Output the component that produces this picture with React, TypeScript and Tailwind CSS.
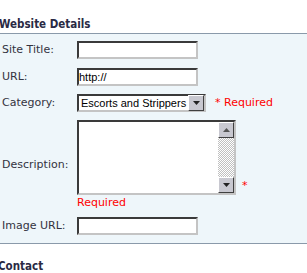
import React from 'react'

const label = 'w-[75px] shrink-0 text-[11px] text-[#333340]'
const inset = 'border-2 border-t-[#3a3a3a] border-l-[#3a3a3a] border-r-[#c4c4c4] border-b-[#c4c4c4] bg-white'

function Btn({ up }: { up?: boolean }) {
  return (
    <div className="w-[16px] h-[16px] flex items-center justify-center bg-[#c8c8d0] border border-t-white border-l-white border-r-[#404040] border-b-[#404040]">
      <svg width="7" height="4" viewBox="0 0 7 4">
        {up ? <path d="M0 4 L7 4 L3.5 0 Z" fill="#555" /> : <path d="M0 0 L7 0 L3.5 4 Z" fill="#222" />}
      </svg>
    </div>
  )
}

export default function App() {
  return (
    <div className="w-[307px] h-[273px] overflow-hidden bg-white" style={{ fontFamily: '"DejaVu Sans", Verdana, sans-serif' }}>
      <h2 className="pt-[17px] ml-[-1px] h-[33px] leading-[15px] text-[11.5px] font-bold text-[#2a2a44]" style={{ fontFamily: '"DejaVu Sans Condensed", "DejaVu Sans", sans-serif' }}>
        Website Details
      </h2>
      <div className="border-t border-b border-[#8a9aaa] bg-[#eef6fa] pt-[7px] pb-[8px] pl-[2px]">
        <div className="flex items-center h-[18px]">
          <span className={label}>Site Title:</span>
          <div className={`w-[121px] h-[18px] ${inset}`} />
        </div>
        <div className="flex items-center h-[18px] mt-[9px]">
          <span className={label}>URL:</span>
          <div className={`w-[121px] h-[18px] ${inset} text-[11px] leading-[14px] text-black`} style={{ fontFamily: '"Liberation Sans", Arial, sans-serif' }}>
            http://
          </div>
        </div>
        <div className="flex items-center h-[18px] mt-[8px]">
          <span className={label}>Category:</span>
          <div className={`w-[129px] h-[18px] ${inset} flex items-center justify-between`}>
            <span className="pl-[2px] text-[11px] text-black" style={{ fontFamily: '"Liberation Sans", Arial, sans-serif' }}>Escorts and Strippers</span>
            <Btn />
          </div>
          <span className="ml-[9px] text-[11px] text-[#ff0000]">* Required</span>
        </div>
        <div className="flex items-center mt-[8px]">
          <span className={label}>Description:</span>
          <div className="flex flex-col">
            <div className="flex items-end">
              <div className={`w-[159px] h-[75px] ${inset} flex justify-end`}>
                <div className="w-[16px] h-full flex flex-col justify-between bg-[repeating-conic-gradient(#c0c0c0_0%_25%,#ffffff_0%_50%)] bg-[length:2px_2px]">
                  <Btn up />
                  <Btn />
                </div>
              </div>
              <span className="ml-[6px] mb-[3px] text-[11px] leading-[12px] text-[#ff0000]">*</span>
            </div>
            <div className="mt-[1px] h-[14px] text-[11px] leading-[14px] text-[#ff0000]">Required</div>
          </div>
        </div>
        <div className="flex items-center h-[18px] mt-[7px]">
          <span className={label}>Image URL:</span>
          <div className={`w-[121px] h-[18px] ${inset}`} />
        </div>
      </div>
      <h2 className="mt-[15px] ml-[-2px] leading-[15px] text-[11.5px] font-bold text-[#2a2a44]" style={{ fontFamily: '"DejaVu Sans Condensed", "DejaVu Sans", sans-serif' }}>
        Contact
      </h2>
    </div>
  )
}
